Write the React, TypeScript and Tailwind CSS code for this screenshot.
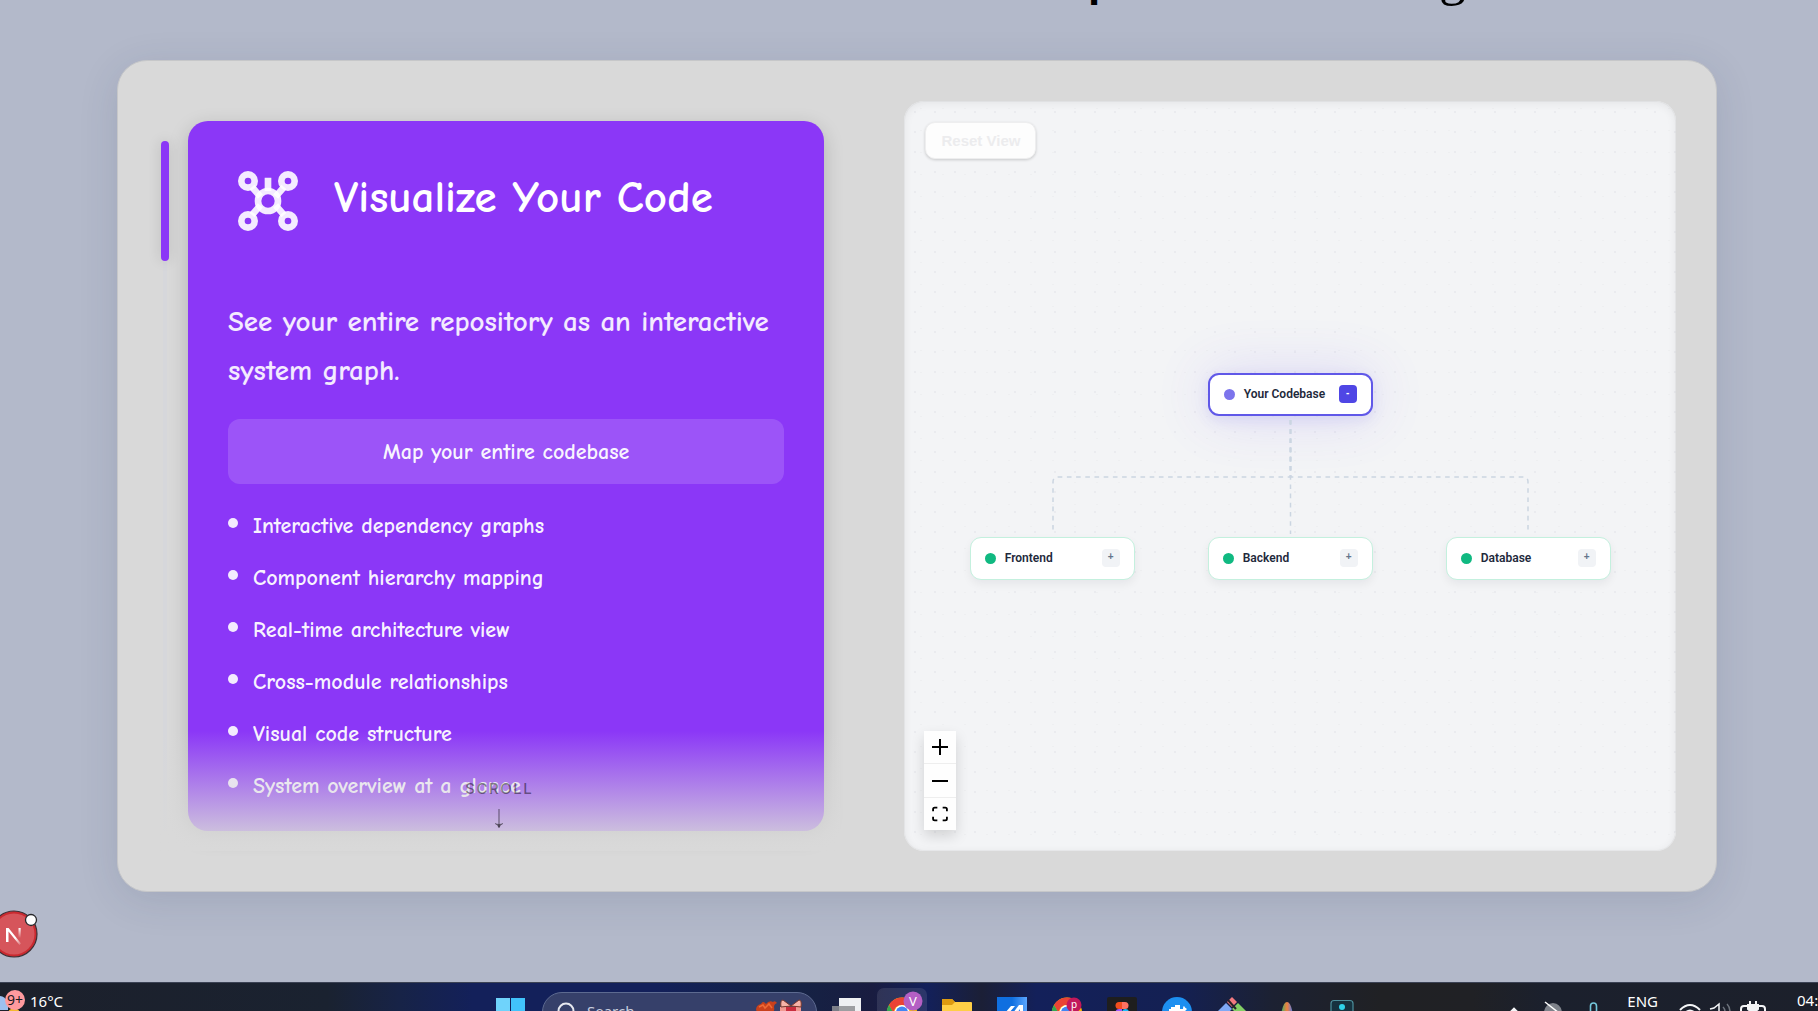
import type { ReactNode } from 'react';

const features = [
  'Interactive dependency graphs',
  'Component hierarchy mapping',
  'Real-time architecture view',
  'Cross-module relationships',
  'Visual code structure',
  'System overview at a glance',
];

function GraphIcon() {
  return (
    <svg className="size-20 shrink-0" viewBox="0 0 24 24" fill="none" stroke="#fff" strokeOpacity="0.9" strokeWidth="2" aria-hidden="true">
      <circle cx="6" cy="6" r="2" />
      <circle cx="18" cy="6" r="2" />
      <circle cx="6" cy="18" r="2" />
      <circle cx="18" cy="18" r="2" />
      <circle cx="12" cy="12" r="3" />
      <path d="M7.2 7.8 9.7 10.7M16.8 7.8l-2.5 2.9M7.2 16.2l2.5-2.9M16.8 16.2l-2.5-2.9M12 5v4" />
    </svg>
  );
}

function FeatureCard() {
  return (
    <article className="h-[710px] flex-1 rounded-[20px] bg-[#8b37f7] p-10 text-white shadow-[0_6px_20px_rgba(0,0,0,0.18)]">
      <header className="flex items-center gap-[26px]">
        <GraphIcon />
        <h2 className="pb-2 text-[45px] leading-[52px] font-bold">Visualize Your Code</h2>
      </header>
      <p className="mt-14 text-[29px] leading-[49px] font-bold text-white/90">
        See your entire repository as an interactive system graph.
      </p>
      <button type="button" className="mt-6 h-[65px] w-full rounded-xl bg-white/15 pt-0.5 text-[22px] font-bold text-white/95">
        Map your entire codebase
      </button>
      <ul className="mt-6 flex flex-col gap-4 text-[22px] leading-[36px] font-bold text-white/95">
        {features.map((f) => (
          <li key={f} className="flex gap-[15px]">
            <span className="mt-2.5 size-[10px] shrink-0 rounded-full bg-white/90" />
            {f}
          </li>
        ))}
      </ul>
    </article>
  );
}

function GraphNode({ label, root = false }: { label: string; root?: boolean }) {
  return (
    <div
      className={
        root
          ? 'flex h-[43px] w-[165px] items-center rounded-[11px] border-2 border-[#4f46e5]/90 bg-white px-3.5 shadow-[0_4px_14px_rgba(79,70,229,0.12),0_0_56px_rgba(99,70,241,0.16)]'
          : 'flex h-[43px] w-[165px] items-center rounded-[11px] border border-[#c4f0de] bg-white px-3.5 shadow-[0_4px_10px_rgba(15,23,42,0.06)]'
      }
    >
      <span className={root ? 'size-[11px] rounded-full bg-[#7c74ec]' : 'size-[11px] rounded-full bg-[#10b981]'} />
      <span className="ml-[9px] font-['Roboto',sans-serif] text-[12px] leading-4 font-semibold whitespace-nowrap text-[#1e293b]">{label}</span>
      <button
        type="button"
        aria-label={root ? `Collapse ${label}` : `Expand ${label}`}
        className={
          root
            ? 'ml-auto size-[18px] rounded-[4px] bg-[#4f46e5] pb-0.5 text-[10px] leading-4 font-bold text-white'
            : 'ml-auto size-[18px] rounded-[4px] bg-[#f1f3f6] pb-0.5 text-[10px] leading-4 font-bold text-[#64748b]'
        }
      >
        {root ? '-' : '+'}
      </button>
    </div>
  );
}

function GraphCanvas() {
  return (
    <section
      aria-label="System graph"
      className="relative flex h-[750px] items-center justify-center overflow-hidden rounded-[20px] bg-[#f3f4f6] font-['Liberation_Sans',Arial,sans-serif]"
    >
      <svg className="absolute inset-0 size-full" aria-hidden="true">
        <defs>
          <pattern id="dots" x="1" y="1" width="20" height="20" patternUnits="userSpaceOnUse">
            <circle cx="10" cy="10" r="1" fill="#e7e9ec" />
          </pattern>
          <pattern id="dotsFine" x="6" y="7" width="22" height="22" patternUnits="userSpaceOnUse">
            <circle cx="11" cy="0.5" r="0.5" fill="#e4e6ea" />
          </pattern>
        </defs>
        <rect width="100%" height="100%" fill="url(#dots)" />
        <rect width="100%" height="100%" fill="url(#dotsFine)" />
      </svg>

      <div className="relative flex w-[641px] flex-col items-center">
        <GraphNode label="Your Codebase" root />
        <svg className="h-[121px] w-full" viewBox="0 0 641 121" fill="none" stroke="#cbd5e1" strokeWidth="1.5" strokeDasharray="4.6 4.6" aria-hidden="true">
          <path d="M320.5 4V61H88Q83 61 83 66V118" />
          <path d="M320.5 4V118" />
          <path d="M320.5 4V61" strokeWidth="2" />
          <path d="M320.5 4V61H553Q558 61 558 66V118" />
        </svg>
        <div className="flex w-full justify-between">
          <GraphNode label="Frontend" />
          <GraphNode label="Backend" />
          <GraphNode label="Database" />
        </div>
      </div>

      <button
        type="button"
        className="absolute top-[21px] left-[21px] h-[37px] rounded-[10px] border border-[#eeeeef] bg-[#fdfdfd] px-[15px] text-[15px] leading-5 font-bold text-[#ececee] shadow-[0_1px_3px_rgba(0,0,0,0.18)]"
      >
        Reset View
      </button>

      <div className="absolute bottom-[21px] left-5 flex w-8 flex-col divide-y divide-[#eeeeee] bg-[#fefefe] shadow-[0_6px_14px_rgba(0,0,0,0.14)]">
        <button type="button" aria-label="Zoom in" className="grid h-[33px] place-items-center">
          <svg className="size-4" viewBox="0 0 16 16" stroke="#000" strokeWidth="2" aria-hidden="true">
            <path d="M8 0V16M0 8H16" />
          </svg>
        </button>
        <button type="button" aria-label="Zoom out" className="grid h-[34px] place-items-center">
          <svg className="size-4" viewBox="0 0 16 16" stroke="#000" strokeWidth="2" aria-hidden="true">
            <path d="M0 8H16" />
          </svg>
        </button>
        <button type="button" aria-label="Fit view" className="grid h-8 place-items-center">
          <svg className="size-4" viewBox="0 0 15 15" fill="none" stroke="#000" strokeWidth="1.7" aria-hidden="true">
            <path d="M1 5V3Q1 1.500 2.500 1.500H5M10 1.500h2.500Q14 1.500 14 3v2M14 10v2q0 1.500-1.500 1.500H10M5 13.500H2.500Q1 13.500 1 12v-2" />
          </svg>
        </button>
      </div>
      <div className="pointer-events-none absolute inset-0 rounded-[20px] shadow-[inset_0_2px_10px_rgba(0,0,0,0.07),inset_0_0_0_1px_rgba(0,0,0,0.03)]" />
    </section>
  );
}

function NextBadge() {
  return (
    <button type="button" aria-label="Open dev tools" className="absolute bottom-[48px] left-[-12px] h-[60px] w-[52px]">
      <svg className="size-full overflow-visible" viewBox="0 0 52 60" aria-hidden="true">
        <defs>
          <linearGradient id="nDiag" x1="0" y1="0" x2="1" y2="1">
            <stop offset="0.6" stopColor="#fff" />
            <stop offset="1" stopColor="#fff" stopOpacity="0.1" />
          </linearGradient>
          <linearGradient id="nBar" x1="0" y1="0" x2="0" y2="1">
            <stop offset="0" stopColor="#fff" />
            <stop offset="1" stopColor="#fff" stopOpacity="0" />
          </linearGradient>
        </defs>
        <circle cx="26" cy="31" r="23" fill="#ca2a30" stroke="#3f3036" strokeWidth="1.2" />
        <circle cx="26" cy="31" r="20.5" fill="#d6555b" />
        <path d="M18 39V25h2.600L33 40.500l-1.500 1.500L20.500 28.500V39z" fill="url(#nDiag)" />
        <rect x="30.500" y="25" width="2.200" height="10" fill="url(#nBar)" />
        <circle cx="43" cy="17" r="5.500" fill="#fff" stroke="#26262a" strokeWidth="1.300" />
      </svg>
    </button>
  );
}

function AppIcon({ label, active = false, children }: { label: string; active?: boolean; children: ReactNode }) {
  return (
    <button
      type="button"
      aria-label={label}
      className={
        active
          ? '-mx-[9px] mt-1.5 flex h-12 w-12 shrink-0 items-start justify-center rounded-md bg-white/10 ring-1 ring-white/10'
          : 'flex h-[30px] w-[30px] shrink-0 items-start'
      }
    >
      <svg className={active ? '-mt-1.5 h-[30px] w-[30px] overflow-visible' : 'h-[30px] w-[30px] overflow-visible'} viewBox="0 0 30 30" aria-hidden="true">
        {children}
      </svg>
    </button>
  );
}

function Chrome() {
  return (
    <>
      <circle cx="15" cy="29.500" r="15" fill="#fbbc05" />
      <path d="M2 22A15 15 0 0 1 28 22H15A7.500 7.500 0 0 0 7 31z" fill="#ea4335" />
      <path d="M2 22 9 34v10A15 15 0 0 1 2 22z" fill="#34a853" />
      <circle cx="15" cy="29.500" r="7.500" fill="#fff" />
      <circle cx="15" cy="29.500" r="6" fill="#4285f4" />
    </>
  );
}

function Taskbar() {
  return (
    <footer className="grid h-[29px] shrink-0 grid-cols-[496fr_861px_461fr] overflow-hidden border-t border-[#3b4254] bg-[linear-gradient(90deg,#1c202b_0%,#1a2230_18%,#172347_22%,#13205a_26%,#13205a_36%,#142345_43%,#191c40_48%,#13205a_51%,#1b1f36_54%,#13205a_57%,#142052_65%,#1c2132_70%,#202124_76%,#202125_81%,#1b202d_85%,#1c202b_100%)] font-['Noto_Sans',sans-serif] text-white">
      <div className="flex overflow-hidden">
        <svg className="h-[29px] w-[26px] shrink-0" viewBox="0 0 26 29" aria-hidden="true">
          <circle cx="14" cy="31" r="6" fill="#f5b82e" />
          <path d="M0 13q5 0 8 7v7H0z" fill="#9dc0f0" />
          <circle cx="15" cy="17" r="10" fill="#ff9a9e" />
          <text x="15" y="22" textAnchor="middle" fontSize="14" fill="#1b1b1f">9+</text>
        </svg>
        <span className="mt-2 ml-1 text-[15px] leading-5">16°C</span>
      </div>

      <div className="flex">
        <AppIcon label="Start">
          <rect y="15" width="14" height="15" fill="#6fd3fb" />
          <rect x="15" y="15" width="14" height="15" fill="#41c3fb" />
        </AppIcon>
        <label className="mt-[9px] ml-4 flex h-10 w-[275px] shrink-0 rounded-full border border-[#5d6a90] bg-[#36406a] pl-3.5">
          <svg className="mt-[9px] size-[22px] shrink-0" viewBox="0 0 22 22" fill="none" stroke="#e6e8ef" strokeWidth="2" aria-hidden="true">
            <circle cx="9" cy="9" r="7.500" />
            <path d="m3 15-3 4" />
          </svg>
          <input type="text" aria-label="Search" placeholder="Search" className="mt-2 ml-2 h-5 w-[120px] bg-transparent text-[15px] leading-5 placeholder:text-[#c9cede]" />
          <svg className="mt-1 ml-auto h-[30px] w-[60px] overflow-visible" viewBox="0 0 60 30" aria-hidden="true">
            <path d="M0 13q0-5 5-6 2-4 5 0 3-4 7-2 2-2 4 1-3 1-3 4 1 4-2 6H2z" fill="#c8401c" />
            <path d="m3 10 4-2 2 3 4-4 3 4" fill="none" stroke="#ef6a35" strokeWidth="1.500" />
            <path d="M24 10h21v18H24z" fill="#f29a92" />
            <path d="M30 10h10v18H30z" fill="#c92d3e" />
            <path d="m35 9-8-6q-3 0-2 7zM35 9l8-6q3 0 2 7z" fill="#f7b3a8" stroke="#7d3a2d" />
          </svg>
        </label>
        <div className="ml-[15px] flex gap-[25px]">
          <AppIcon label="Task view">
            <rect x="7" y="15" width="22" height="20" fill="#eef0f2" />
            <rect y="23" width="23" height="10" fill="#8d8f93" fillOpacity="0.85" />
          </AppIcon>
          <AppIcon label="Chrome, profile V" active>
            <Chrome />
            <circle cx="26" cy="18" r="9.500" fill="#b45fc4" />
            <text x="26" y="23" textAnchor="middle" fontSize="13" fill="#fff">V</text>
          </AppIcon>
          <AppIcon label="File explorer">
            <path d="M0 17q0-1 1-1h9l3 3h16q1 0 1 1v12H0z" fill="#ffcf46" />
            <path d="M0 17q0-1 1-1h9l3 3-3 3H0z" fill="#dd9a10" />
          </AppIcon>
          <AppIcon label="Editor">
            <defs>
              <linearGradient id="editorBg"><stop stopColor="#0f6fe0" /><stop offset="0.5" stopColor="#0f6fe0" /><stop offset="1" stopColor="#5ba6ff" /></linearGradient>
            </defs>
            <rect y="14" width="30" height="20" fill="url(#editorBg)" />
            <path d="m8 30 6-7h4l-6 7zM16 30l6-8h4v8h-3v-4l-3 4z" fill="#fff" />
          </AppIcon>
          <AppIcon label="Chrome, profile p">
            <Chrome />
            <circle cx="22" cy="22" r="7.500" fill="#c2185b" />
            <text x="22" y="25" textAnchor="middle" fontSize="10" fill="#fff">p</text>
          </AppIcon>
          <AppIcon label="Figma">
            <rect y="14" width="30" height="20" rx="2" fill="#1e1e1e" />
            <path d="M15 19h-3a3.500 3.500 0 0 0 0 7h3z" fill="#f24e1e" />
            <path d="M15 19h3a3.500 3.500 0 0 1 0 7h-3z" fill="#ff7262" />
            <path d="M15 26h-3a3.500 3.500 0 0 0 0 7h3z" fill="#a259ff" />
            <circle cx="18.500" cy="29.500" r="3.500" fill="#1abcfe" />
          </AppIcon>
          <AppIcon label="Docker">
            <circle cx="15" cy="29" r="15" fill="#1d8ff0" />
            <path d="M7 26h2v-2h4v-2h5v4h3q0-3 1-3 1 2 3 3-3 3-5 6H7z" fill="#fff" />
          </AppIcon>
          <AppIcon label="Git">
            <path d="m15 14 5 5-5 5-5-5z" fill="#f27a7f" />
            <path d="m9 20 6 6-9 9-6-6z" fill="#7fa9f5" />
            <path d="m21 20 9 9-6 6-9-9z" fill="#83cf65" />
            <path d="m11 17 8 9" stroke="#2a2226" strokeWidth="2" />
          </AppIcon>
          <AppIcon label="Assistant">
            <defs>
              <linearGradient id="dropBg"><stop stopColor="#38b36a" /><stop offset="0.5" stopColor="#f5803c" /><stop offset="1" stopColor="#4b7df0" /></linearGradient>
            </defs>
            <path d="M9 32q2-13 6-13t6 13z" fill="url(#dropBg)" />
          </AppIcon>
          <AppIcon label="Terminal">
            <rect x="4" y="17.500" width="22" height="22" rx="3" fill="#16323f" stroke="#4c8f9c" strokeWidth="1.200" />
            <circle cx="15" cy="24" r="3" fill="#2fd3ea" />
            <path d="M11 30q4-4 8 0z" fill="#2fd3ea" />
          </AppIcon>
        </div>
      </div>

      <div className="flex justify-end overflow-hidden">
        <svg className="h-[29px] w-[100px] shrink-0" viewBox="0 0 100 29" fill="none" aria-hidden="true">
          <path d="m11 31 5-5 5 5" stroke="#f4f5f7" strokeWidth="2.500" />
          <path d="M46 29q1-8 9-9 8 1 9 9z" fill="#7f838b" />
          <path d="m47 19 14 11" stroke="#fff" strokeWidth="1.500" />
          <rect x="92.500" y="20" width="6" height="14" rx="3" stroke="#74c8dc" strokeWidth="1.600" />
        </svg>
        <span className="mt-2 ml-[29px] text-[15px] leading-5">ENG</span>
        <svg className="ml-[21px] h-[29px] w-[88px] shrink-0" viewBox="0 0 88 29" fill="none" stroke="#f4f5f7" strokeWidth="2" aria-hidden="true">
          <path d="M1 27q10-10 20 0M5 31q6-7 12 0" />
          <path d="m31 26 4-1 5-4v9" strokeWidth="1.500" />
          <path d="M44 24q2 2 2 5M48 21q3 3 3 8" stroke="#6d727c" strokeWidth="1.500" />
          <rect x="62" y="23" width="24" height="10" rx="3" />
          <path d="M71 18v4M77 18v4M69 22h10v4q-5 5-10 0z" fill="#f4f5f7" />
        </svg>
        <span className="mt-[7px] ml-[30px] w-[21px] shrink-0 overflow-hidden text-[15px] leading-5">04:</span>
      </div>
    </footer>
  );
}

export default function App() {
  return (
    <div className="relative flex h-screen flex-col overflow-hidden bg-[#b3b9ca]">
      <header className="flex h-[60px] shrink-0 items-start justify-center overflow-hidden pl-[736px]" aria-hidden="true">
        <span className="-mt-[43px] font-['Liberation_Sans'] text-[44px] leading-[48px] font-semibold text-black">p</span>
        <span className="-mt-[49px] ml-[324px] font-['Liberation_Serif'] text-[54px] leading-[50px] text-black">g</span>
      </header>

      <main className="mr-[101px] ml-[117px] grid shrink-0 grid-cols-[666fr_771fr] gap-20 rounded-[30px] border border-[#c6c7c9] bg-[#d9d9d9] p-10 shadow-[0_8px_40px_rgba(30,50,80,0.12)]">
        <div className="relative flex pt-5 font-['Comic_Neue','Noto_Sans',sans-serif]">
          <div className="mt-5 mr-[19px] ml-[3px] flex h-[690px] w-2 shrink-0 justify-center bg-[linear-gradient(90deg,transparent_2px,#d6d7db_2px,#d6d7db_6px,transparent_6px)]">
            <div className="h-[120px] w-2 rounded-full bg-[#8b37f7] shadow-[0_0_14px_rgba(0,0,0,0.14)]" />
          </div>
          <FeatureCard />
          <div className="pointer-events-none absolute -right-4 bottom-0 left-0 flex h-[120px] flex-col items-center bg-linear-to-b from-[#d9d9d9]/0 to-[#d9d9d9] pt-12 font-['Inter',sans-serif] text-black/45">
            <span className="text-[15px] leading-5 font-medium tracking-widest">SCROLL</span>
            <svg className="mt-2.5 h-5 w-2.5" viewBox="0 0 10 20" fill="none" stroke="currentColor" aria-hidden="true">
              <path d="M5 0v18" strokeWidth="1.200" />
              <path d="M1 14.500q3 1 4 4.500 1-3.500 4-4.500l-4 1z" fill="currentColor" strokeWidth="0.500" />
            </svg>
          </div>
        </div>
        <GraphCanvas />
      </main>

      <div className="flex-1" />
      <NextBadge />
      <Taskbar />
    </div>
  );
}
